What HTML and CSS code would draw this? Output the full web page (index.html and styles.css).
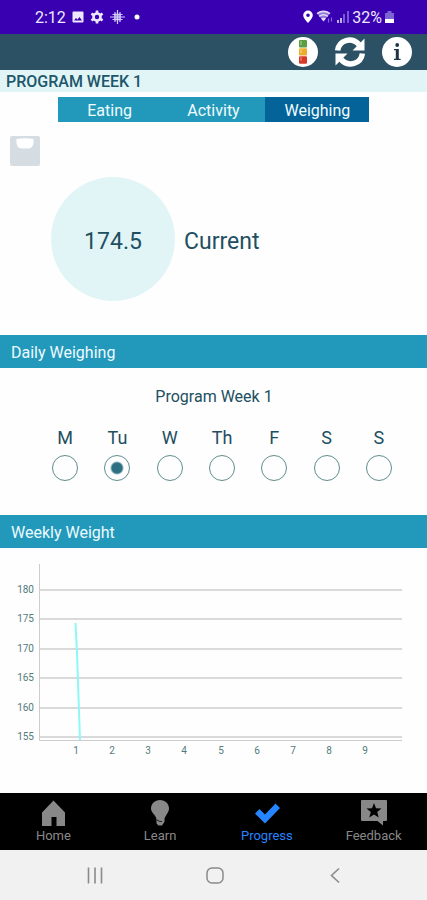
FILE: index.html
```html
<!DOCTYPE html>
<html lang="en">
<head>
<meta charset="utf-8">
<meta name="viewport" content="width=device-width, initial-scale=1">
<title>Progress</title>
<link rel="stylesheet" href="styles.css">
</head>
<body>
<div class="app">
  <div class="status">
    <div class="status-group">
      <span class="clock">2:12</span>
      <svg width="12" height="12" viewBox="0 0 12 12"><path fill="#eee8ff" fill-rule="evenodd" d="M1.500 0.500h9a1 1 0 0 1 1 1v9a1 1 0 0 1-1 1h-9a1 1 0 0 1-1-1v-9a1 1 0 0 1 1-1zM2 9.500h8L7.500 6 5.500 8.500 4 7z"/></svg>
      <svg width="14" height="14" viewBox="0 0 14 14"><g fill="none" stroke="#eee8ff"><circle cx="7" cy="7" r="3.500" stroke-width="2.600"/><path stroke-width="2.600" d="M7 .5v3M7 10.500v3M1.400 3.700l2.400 1.500M10.200 8.800l2.400 1.500M1.400 10.300l2.400-1.500M10.200 5.200l2.400-1.500"/></g></svg>
      <svg width="15" height="14" viewBox="0 0 15 14"><rect x="4" y="3.500" width="7" height="7" rx="1.500" fill="#8f78dc"/><path fill="none" stroke="#d5caf8" stroke-width="1.200" d="M7.500 0v14M0 7h15M5 2v10M10 2v10M2.500 4.500h10M2.500 9.500h10"/></svg>
      <svg class="dot" width="6" height="6" viewBox="0 0 6 6"><circle cx="3" cy="3" r="2.500" fill="#fff"/></svg>
    </div>
    <div class="status-group tight">
      <svg width="12" height="14" viewBox="0 0 12 14"><path fill="#fff" fill-rule="evenodd" d="M6 .5a4.800 4.800 0 0 1 4.800 4.800C10.800 8.500 6 13 6 13S1.200 8.500 1.200 5.300A4.800 4.800 0 0 1 6 .5zM6 3.500a1.800 1.800 0 1 0 0 3.600 1.800 1.800 0 0 0 0-3.600z"/></svg>
      <svg width="18" height="14" viewBox="0 0 18 14"><path fill="#8f78dc" d="M1 3.500Q7.500-1 14 3.500L7.500 11z"/><g fill="none" stroke="#e4dcfb" stroke-width="1.600"><path d="M1 3.600Q7.500-.8 14 3.600M3.200 6.300q4.300-3 8.600 0"/></g><path fill="#e4dcfb" d="M5 8.400q2.500-1.500 5 0L7.500 11.500z"/><path stroke="#8469d6" stroke-width="1.200" d="M12.500 8.500v4M15.500 7.500v4"/></svg>
      <svg width="14" height="14" viewBox="0 0 14 14"><path stroke="#bcaef0" stroke-width="2" d="M2 10v3M5 8v5"/><path stroke="#7759d0" stroke-width="2" d="M8 4v9M12 1v12"/></svg>
      <span class="clock">32%</span>
      <svg width="11" height="14" viewBox="0 0 11 14"><path fill="#7d64d3" d="M3.500 1h4v2H10v6H1V3h2.500z"/><path fill="#fff" d="M1 9h9v4H1z"/></svg>
    </div>
  </div>
  <div class="toolbar">
    <button class="tool" aria-label="Traffic light">
      <svg width="32" height="32" viewBox="0 0 32 32"><circle cx="16" cy="16" r="15" fill="#fff"/><rect x="12" y="4" width="8" height="7.500" rx="1" fill="#5b9f42"/><rect x="12" y="12.200" width="8" height="7.300" rx="1" fill="#edae2b"/><rect x="12" y="20.200" width="8" height="7.500" rx="1" fill="#d63a26"/><path fill="#fff" opacity=".25" d="M13 5h2v4h-2zM13 13h2v4h-2zM13 21h2v4h-2z"/></svg>
    </button>
    <button class="tool" aria-label="Refresh">
      <svg width="32" height="32" viewBox="0 0 32 32"><g fill="none" stroke="#fff" stroke-width="5.500"><path d="M3.600 14.500C5 4 17.500.5 25 8.500"/><path d="M28.400 17.500C27 28 14.500 31.500 7 23.500"/></g><path fill="#fff" d="M30.500 2.500v12H18.500zM1.500 29.500v-12h12z"/></svg>
    </button>
    <button class="tool" aria-label="Information">
      <svg width="32" height="32" viewBox="0 0 32 32"><circle cx="16" cy="16" r="15" fill="#fff"/><g fill="#1c3548"><circle cx="16.200" cy="9" r="1.900"/><path d="M13 13h4.800v9.800h1.800V24h-6.600v-1.200h1.800v-8.600H13z"/></g></svg>
    </button>
  </div>
  <h1 class="week">PROGRAM WEEK 1</h1>
  <main>
    <div class="tabs">
      <button class="tab">Eating</button>
      <button class="tab">Activity</button>
      <button class="tab active">Weighing</button>
    </div>
    <section class="weight">
      <svg class="scale" width="30" height="30" viewBox="0 0 30 30"><rect width="30" height="30" rx="2" fill="#d5dce2"/><path fill="#fff" d="M6.500 3q8.500-1.500 17 0 1 9.500-5.500 9.500h-6Q5.500 12.500 6.500 3z"/></svg>
      <div class="current"><div class="disc">174.5</div><span>Current</span></div>
    </section>
    <h2 class="bar">Daily Weighing</h2>
    <fieldset class="daily">
      <legend>Program Week 1</legend>
      <div class="days">
        <label>M<input type="radio" name="day"></label>
        <label>Tu<input type="radio" name="day" checked></label>
        <label>W<input type="radio" name="day"></label>
        <label>Th<input type="radio" name="day"></label>
        <label>F<input type="radio" name="day"></label>
        <label>S<input type="radio" name="day"></label>
        <label>S<input type="radio" name="day"></label>
      </div>
    </fieldset>
    <h2 class="bar">Weekly Weight</h2>
    <svg class="chart" viewBox="0 0 427 226" role="img" aria-label="Weekly weight">
      <path class="grid" d="M40 42h362M40 71h362M40 101h362M40 130h362M40 160h362M40 189h362"/>
      <path class="axis" d="M39.500 16v176.500H402"/>
      <path class="line" d="M75.500 75l1.500 30 3 87"/>
      <g class="ticks end"><text x="34" y="45">180</text><text x="34" y="74">175</text><text x="34" y="104">170</text><text x="34" y="133">165</text><text x="34" y="163">160</text><text x="34" y="192">155</text></g>
      <g class="ticks"><text x="76" y="206">1</text><text x="112" y="206">2</text><text x="148" y="206">3</text><text x="184" y="206">4</text><text x="221" y="206">5</text><text x="257" y="206">6</text><text x="293" y="206">7</text><text x="329" y="206">8</text><text x="365" y="206">9</text></g>
    </svg>
  </main>
  <nav class="nav">
    <a href="#home"><svg width="28" height="28" viewBox="0 0 28 28"><path fill="#888" d="M14.500 1.500l11.500 12V27h-8.500v-9h-5v9H3V13.500z"/></svg>Home</a>
    <a href="#learn"><svg width="28" height="28" viewBox="0 0 28 28"><path fill="#888" d="M14 1c5.300 0 9 3.800 9 8.500 0 4-3.500 6.500-4.500 10.300v3L16 26.500h-3.500l-2-2V20C9.500 15.700 5 13.500 5 9.500 5 4.800 8.700 1 14 1z"/><path stroke="#222" fill="none" d="M11 21l3 1.500h2"/></svg>Learn</a>
    <a href="#progress" class="on"><svg width="28" height="28" viewBox="0 0 28 28"><path fill="#2584ff" d="M2 14.500L6.500 10l5.500 5.500L22.500 4.500 27 9 12 24.500z"/></svg>Progress</a>
    <a href="#feedback"><svg width="28" height="28" viewBox="0 0 28 28"><path fill="#888" d="M2 1h24q1 0 1 1v19q0 1-1 1h-3v4.500L17.500 22H2q-1 0-1-1V2q0-1 1-1z"/><path fill="#000" d="M14 4l2 5.200 5.500.3-4.300 3.500 1.500 5.500-4.700-3-4.700 3 1.500-5.500-4.300-3.500 5.500-.3z"/></svg>Feedback</a>
  </nav>
  <div class="system">
    <button aria-label="Recent apps"><svg width="20" height="20" viewBox="0 0 20 20"><path stroke="#8a8a8a" stroke-width="1.600" d="M4.500 2.500v16M11 2.500v16M17.500 2.500v16"/></svg></button>
    <button aria-label="Home screen"><svg width="20" height="20" viewBox="0 0 20 20"><rect x="3" y="3" width="16" height="15" rx="5" fill="none" stroke="#8a8a8a" stroke-width="1.500"/></svg></button>
    <button aria-label="Back"><svg width="20" height="20" viewBox="0 0 20 20"><path fill="none" stroke="#8a8a8a" stroke-width="1.600" d="M15 3.500l-7.500 7 7.500 7"/></svg></button>
  </div>
</div>
</body>
</html>
```
FILE: styles.css
```css
* { box-sizing: border-box; }
body { margin: 0; background: #fefefe; color: #214f61; font-family: Roboto, sans-serif; }
button { border: 0; padding: 0; margin: 0; background: none; font: inherit; color: inherit; }
svg { display: block; flex: none; }
h1, h2 { margin: 0; font-weight: 400; }
.app { min-height: 100vh; display: flex; flex-direction: column; }
main { flex: 1; }
.status { height: 34px; background: #3900b2; color: #eee8ff; display: flex; justify-content: space-between; align-items: center; padding: 0 32px 0 35px; font-size: 16px; }
.status-group { display: flex; align-items: center; gap: 6px; }
.tight { gap: 2px; }
.dot { margin-left: 3px; }
.toolbar { height: 36px; background: #2c5064; display: flex; justify-content: flex-end; align-items: center; gap: 15px; padding-right: 14px; }
.week { height: 22px; line-height: 24px; padding-left: 6px; background: #e1f5f7; font-size: 16px; font-weight: 500; color: #20566a; }
.tabs { display: flex; width: 73%; margin: 5px auto 0; background: #2299bb; }
.tab { flex: 1; height: 25px; padding-top: 2px; color: #f0fcff; font-size: 16px; }
.active { background: #046499; }
.weight { padding: 14px 10px 34px; }
.current { display: flex; align-items: center; gap: 9px; margin: 11px 0 0 41px; font-size: 23px; }
.disc { width: 124px; height: 124px; border-radius: 50%; background: #e1f5f6; display: flex; align-items: center; justify-content: center; }
.current span, .disc { padding-top: 4px; }
.bar { height: 33px; line-height: 35px; padding-left: 11px; background: #2299bb; color: #edfaff; font-size: 16px; }
.daily { margin: 0; border: 0; padding: 0 22px 34px 39px; min-width: 0; }
legend { width: 100%; padding: 18px 16px 0 0; line-height: 22px; font-size: 16px; text-align: center; }
.days { display: flex; padding-top: 19px; }
.days label { flex: 1; display: flex; flex-direction: column; align-items: center; gap: 6px; font-size: 18px; line-height: 22px; }
.days input { appearance: none; width: 26px; height: 26px; margin: 0; border: 1px solid #5f8c8d; border-radius: 50%; }
.days input:checked { background: radial-gradient(circle, #2d7083 5px, transparent 7px); }
.chart { width: 100%; height: auto; }
.grid { stroke: #dadada; stroke-width: 2; }
.axis { fill: none; stroke: #cdcdcd; }
.line { fill: none; stroke: #8ff7f8; stroke-width: 2; }
.ticks { font-size: 10px; fill: #537b7c; text-anchor: middle; }
.end { text-anchor: end; }
.nav { height: 57px; background: #000; display: flex; }
.nav a { flex: 1; display: flex; flex-direction: column; align-items: center; padding-top: 6px; color: #888; text-decoration: none; font-size: 13px; line-height: 17px; }
.nav .on { color: #2584ff; }
.system { height: 50px; background: #f1f1f1; display: flex; justify-content: center; align-items: center; gap: 100px; }
```
